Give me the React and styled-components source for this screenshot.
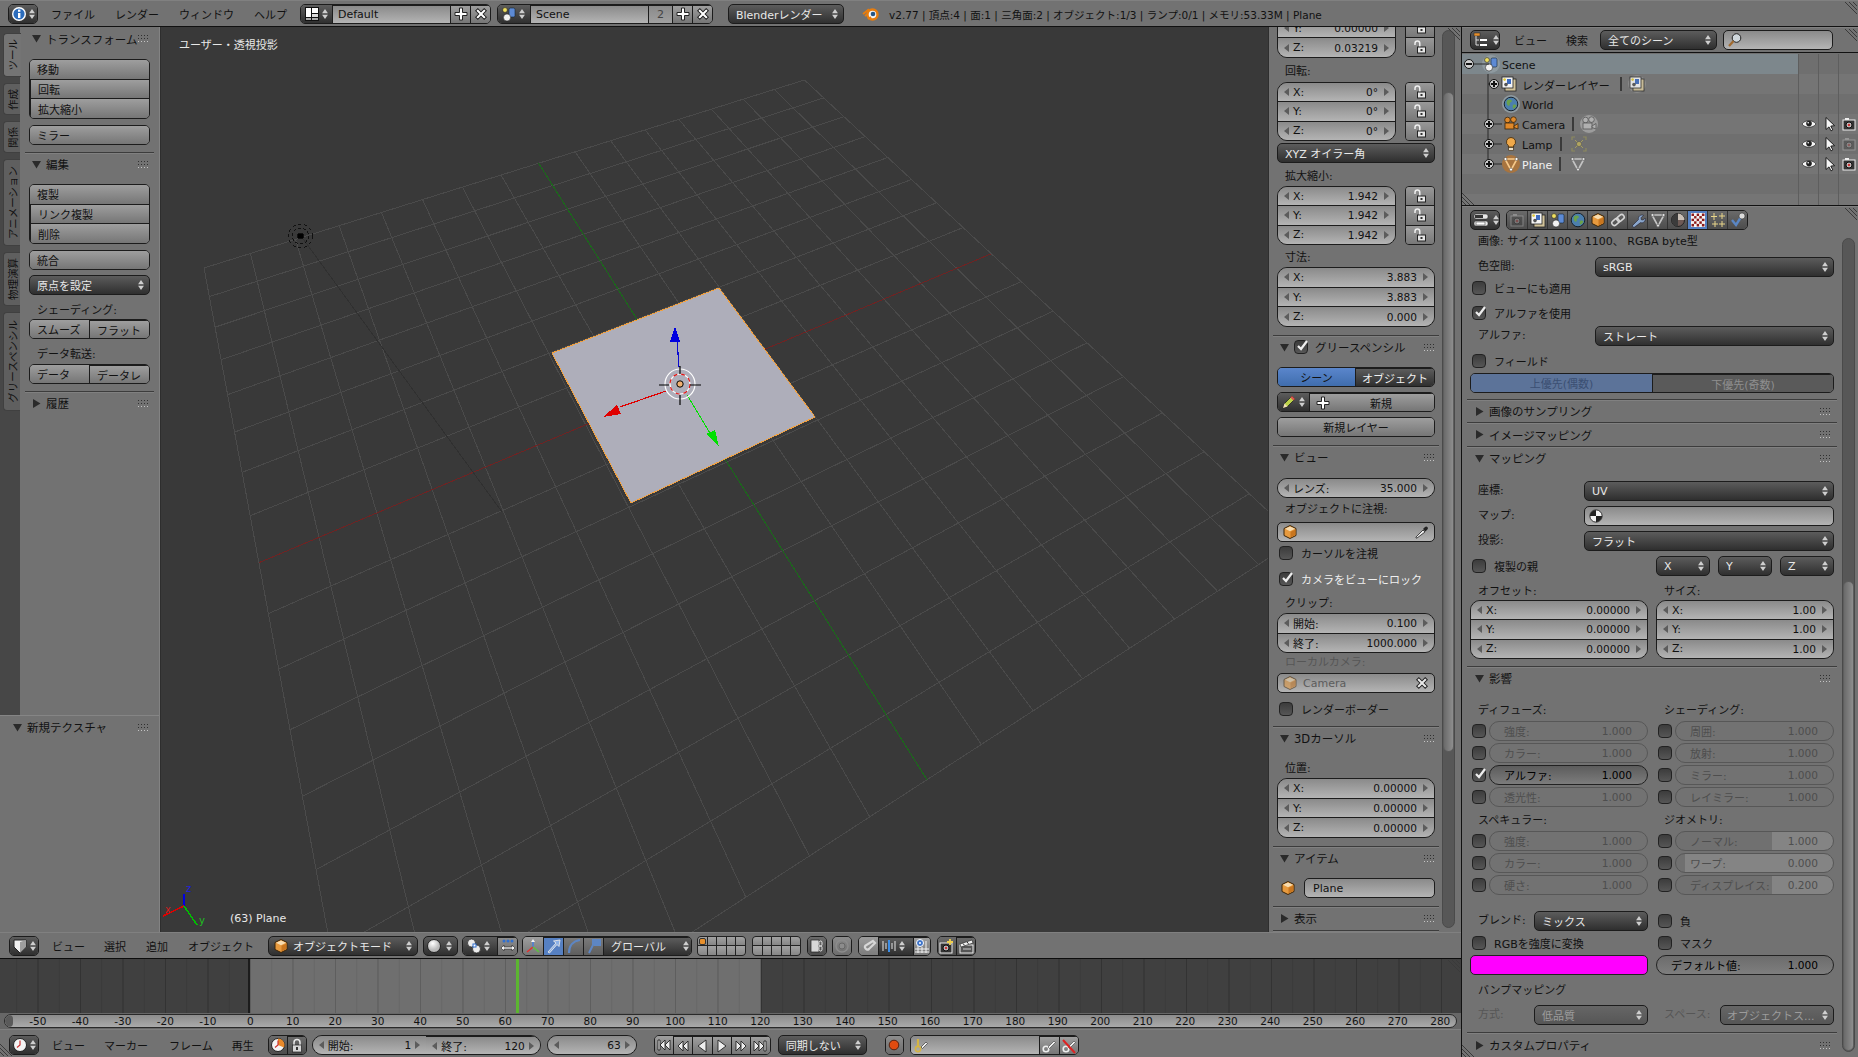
import React from "react";
import styled, { createGlobalStyle, css } from "styled-components";

const mt = css`
  margin-top: ${(p) => p.$mt || 0}px;
`;

const GlobalStyle = createGlobalStyle`
  html, body { margin: 0; padding: 0; background: #727272; overflow: hidden; }
  * { box-sizing: border-box; }
  body {
    font-family: "DejaVu Sans", "Noto Sans CJK JP", sans-serif;
    font-size: 11px;
    color: #111;
  }
`;

const Screen = styled.div`
  width: 1858px;
  height: 1057px;
  display: flex;
  flex-direction: column;
  position: relative;
  overflow: hidden;
`;

const HeaderBar = styled.div`
  display: flex;
  align-items: center;
  background: #727272;
  flex: none;
  height: ${(p) => p.$h || 26}px;
  padding-left: ${(p) => p.$pl ?? 8}px;
  padding-top: ${(p) => p.$pt || 0}px;
  border-top: 1px solid #808080;
  ${(p) => p.$line && "border-bottom: 1px solid #111;"}
  position: relative;
  white-space: nowrap;
`;

const Main = styled.div`
  display: flex;
  flex: 1;
  min-height: 0;
`;
const LeftCol = styled.div`
  width: 1461px;
  display: flex;
  flex-direction: column;
`;
const RightCol = styled.div`
  width: 397px;
  display: flex;
  flex-direction: column;
  border-left: 1px solid #111;
`;
const ViewRow = styled.div`
  height: 905px;
  display: flex;
  flex: none;
`;

/* shared controls */
const Seg = styled.div`
  ${mt}
  display: flex;
  flex: none;
  height: ${(p) => p.$h || 20}px;
  width: ${(p) => (p.$w ? p.$w + "px" : "auto")};
  margin-left: ${(p) => p.$ml || 0}px;
  border: 1px solid #1c1c1c;
  border-radius: 5px;
  overflow: hidden;
  flex-direction: ${(p) => (p.$col ? "column" : "row")};
`;
const SegBtn = styled.div`
  flex: ${(p) => (p.$w ? "none" : 1)};
  width: ${(p) => (p.$w ? p.$w + "px" : "auto")};
  display: flex;
  align-items: center;
  justify-content: ${(p) => (p.$center ? "center" : "flex-start")};
  padding-left: ${(p) => p.$pl ?? 0}px;
  background: ${(p) => p.$bg || "linear-gradient(#9e9e9e, #767676)"};
  color: ${(p) => p.$c || "#111"};
  & + & {
    ${(p) => (p.$col ? "border-top" : "border-left")}: 1px solid #1c1c1c;
  }
`;
const Drop = styled.div`
  ${mt}
  display: flex;
  flex: ${(p) => (p.$w || p.$fix ? "none" : "1 1 auto")};
  align-items: center;
  height: 20px;
  width: ${(p) => (p.$w ? p.$w + "px" : "auto")};
  margin-left: ${(p) => (p.$auto ? "auto" : (p.$ml || 0) + "px")};
  padding: 0 3px 0 ${(p) => p.$pl ?? 7}px;
  gap: ${(p) => p.$gap ?? 4}px;
  border: 1px solid #1c1c1c;
  border-radius: 5px;
  color: ${(p) => (p.$off ? "#9c9c9c" : "#e8e8e8")};
  background: ${(p) => (p.$off ? "linear-gradient(#666, #565656)" : "linear-gradient(#5c5c5c, #2f2f2f)")};
`;
const DropText = styled.span`
  flex: 1;
  overflow: hidden;
  white-space: nowrap;
`;
const Fill = styled.span`
  flex: 1;
`;
const Txt = styled.span`
  margin-left: ${(p) => p.$ml || 0}px;
`;
const FieldBox = styled.div`
  ${mt}
  display: flex;
  flex: ${(p) => (p.$w || p.$fix ? "none" : "1 1 auto")};
  align-items: center;
  height: 20px;
  width: ${(p) => (p.$w ? p.$w + "px" : "auto")};
  margin-left: ${(p) => p.$ml || 0}px;
  padding: 0 4px 0 ${(p) => p.$pl ?? 6}px;
  gap: 5px;
  border: 1px solid #1c1c1c;
  border-radius: 5px;
  color: ${(p) => p.$c || "#111"};
  background: linear-gradient(#8a8a8a, #b4b4b4);
`;
const NumGroup = styled.div`
  ${mt}
  flex: ${(p) => (p.$w ? "none" : "1 1 auto")};
  width: ${(p) => (p.$w ? p.$w + "px" : "auto")};
  margin-left: ${(p) => p.$ml || 0}px;
  height: ${(p) => p.$h || 59}px;
  border: 1px solid #1c1c1c;
  border-radius: 10px;
  overflow: hidden;
  display: flex;
  flex-direction: ${(p) => (p.$row ? "row" : "column")};
`;
const NumRow = styled.div`
  flex: 1;
  display: flex;
  align-items: center;
  justify-content: ${(p) => (p.$end ? "flex-end" : "space-between")};
  padding: 0 ${(p) => p.$pr ?? 17}px 0 15px;
  position: relative;
  background: linear-gradient(#8a8a8a, #b4b4b4);
  & > span:last-child {
    font-size: 10.6px;
  }
  & + & {
    border-top: ${(p) => (p.$side ? "0" : "1px solid #1c1c1c")};
    border-left: ${(p) => (p.$side ? "1px solid #1c1c1c" : "0")};
  }
  &::before,
  &::after {
    content: "";
    position: absolute;
    top: 50%;
    margin-top: -4px;
    border: 4px solid transparent;
  }
  &::before {
    left: 2px;
    border-right: 5px solid #5c5c5c;
  }
  &::after {
    right: 2px;
    border-left: 5px solid #5c5c5c;
  }
`;
const LockCol = styled.div`
  display: flex;
  flex-direction: column;
  width: 30px;
  height: ${(p) => p.$h || 59}px;
  border: 1px solid #1c1c1c;
  border-radius: 4px;
  overflow: hidden;
  margin-left: 9px;
  flex: none;
`;
const LockCell = styled.div`
  flex: 1;
  display: flex;
  align-items: center;
  justify-content: center;
  background: linear-gradient(#989898, #787878);
  & + & {
    border-top: 1px solid #1c1c1c;
  }
`;
const Flex = styled.div`
  ${mt}
  display: flex;
  align-items: center;
  margin-left: ${(p) => p.$ml || 0}px;
`;
const Label = styled.div`
  ${mt}
  height: 14px;
  line-height: 14px;
  padding-left: ${(p) => p.$pl ?? 8}px;
  color: ${(p) => p.$c || "#111"};
  white-space: nowrap;
  flex: ${(p) => (p.$w ? "none" : "initial")};
  width: ${(p) => (p.$w ? p.$w + "px" : "auto")};
`;
const CheckRow = styled.div`
  ${mt}
  display: flex;
  align-items: center;
  height: 20px;
  gap: 8px;
  margin-left: 2px;
  color: ${(p) => p.$c || "#111"};
  white-space: nowrap;
`;
const Box = styled.div`
  width: 14px;
  height: 14px;
  flex: none;
  border: 1px solid #222;
  border-radius: 4px;
  background: linear-gradient(#3c3c3c, #565656);
  position: relative;
  margin-right: ${(p) => p.$mr || 0}px;
`;
const Tick = styled.svg`
  position: absolute;
  left: 0;
  top: -3px;
  width: 15px;
  height: 15px;
`;
const Sep = styled.div`
  ${mt}
  height: 1px;
  flex: none;
  background: #3c3c3c;
  box-shadow: 0 1px 0 #808080;
  margin-left: ${(p) => p.$ml ?? -4}px;
  margin-right: ${(p) => p.$mr ?? -4}px;
`;
const Head = styled.div`
  display: flex;
  align-items: center;
  height: ${(p) => p.$h || 22}px;
  flex: none;
  font-size: 11.5px;
  color: #111;
  padding-left: ${(p) => p.$pl ?? 3}px;
  gap: 5px;
  white-space: nowrap;
  & > span {
    min-width: 0;
  }
`;
const Grip = styled.svg`
  width: 11px;
  height: 7px;
  margin-left: auto;
  margin-right: ${(p) => p.$mr ?? 6}px;
  flex: none;
`;
const Tri = styled.svg`
  width: 9px;
  height: 9px;
  flex: none;
`;
const MenuItem = styled.span`
  margin-left: ${(p) => p.$ml}px;
  padding-top: ${(p) => p.$dy || 0}px;
  color: #111;
`;
const Ic = styled.svg`
  width: ${(p) => p.$s || 16}px;
  height: ${(p) => p.$s || 16}px;
  flex: none;
  display: block;
  margin-left: ${(p) => p.$ml || 0}px;
  opacity: ${(p) => p.$op ?? 1};
`;
const Arrows = styled.svg`
  width: 10px;
  height: 14px;
  flex: none;
  display: block;
`;
const Hatch = styled.svg`
  position: absolute;
  width: 12px;
  height: 12px;
  ${(p) => (p.$bl ? "left: 0; bottom: 0;" : "right: 1px; top: 1px;")}
  pointer-events: none;
`;
const Scroll = styled.div`
  position: absolute;
  right: ${(p) => p.$r}px;
  top: ${(p) => p.$top}px;
  height: ${(p) => p.$len}px;
  width: 13px;
  border: 1px solid #4a4a4a;
  border-radius: 7px;
  background: #575757;
  overflow: hidden;
  display: flex;
  flex-direction: column;
`;
const ScrollThumb = styled.div`
  margin-top: ${(p) => p.$top}px;
  height: ${(p) => p.$len}px;
  border-radius: 6px;
  background: linear-gradient(90deg, #6a6a6a, #8e8e8e);
  border: 1px solid #5e5e5e;
`;

/* left tool shelf */
const Shelf = styled.div`
  width: 160px;
  flex: none;
  display: flex;
  flex-direction: column;
  background: #727272;
  border-right: 1px solid #838383;
  box-shadow: 1px 0 0 #2e2e2e;
  z-index: 1;
`;
const ShelfTop = styled.div`
  height: 689px;
  display: flex;
  flex: none;
  border-bottom: 1px solid #858585;
`;
const TabCol = styled.div`
  width: 20px;
  flex: none;
  background: #474747;
  padding: 6px 0 0 3px;
  display: flex;
  flex-direction: column;
  gap: 6px;
`;
const Tab = styled.div`
  height: ${(p) => p.$h}px;
  border-radius: 4px 0 0 4px;
  background: ${(p) => (p.$on ? "#747474" : "#5f5f5f")};
  ${(p) => p.$on && "margin-right: -1px;"}
  border: 1px solid #404040;
  border-right: 0;
  display: flex;
  align-items: center;
  justify-content: center;
  overflow: hidden;
`;
const TabText = styled.span`
  writing-mode: vertical-rl;
  text-orientation: sideways;
  transform: rotate(180deg);
  white-space: nowrap;
  font-size: 10.5px;
  color: #111;
`;
const ShelfBody = styled.div`
  flex: 1;
  min-width: 0;
  padding: 0 9px;
  display: flex;
  flex-direction: column;
`;
const RedoPanel = styled.div`
  flex: 1;
  padding: 0 10px 0 9px;
`;

/* 3d canvas */
const Canvas = styled.div`
  flex: 1;
  position: relative;
  background: #393939;
  overflow: hidden;
`;
const CanvasSvg = styled.svg`
  position: absolute;
  left: 0;
  top: 0;
  width: 100%;
  height: 100%;
`;
const ViewName = styled.div`
  position: absolute;
  left: 19px;
  top: 9px;
  color: #e8e8e8;
  font-size: 11px;
`;
const FrameName = styled.div`
  position: absolute;
  left: 70px;
  bottom: 7px;
  color: #e8e8e8;
  font-size: 11px;
`;

/* n panel */
const NPanel = styled.div`
  width: 193px;
  flex: none;
  background: #727272;
  position: relative;
  overflow: hidden;
  border-left: 1px solid #2e2e2e;
`;
const NBody = styled.div`
  width: 166px;
  padding-left: 8px;
  display: flex;
  flex-direction: column;
  margin-top: -29px;
`;
const FieldRow = styled.div`
  ${mt}
  display: flex;
`;

/* timeline */
const Timeline = styled.div`
  height: 55px;
  flex: none;
  display: flex;
  position: relative;
  border-top: 1px solid #0c0c0c;
  background: #404040;
`;
const Range = styled.div`
  width: ${(p) => p.$w}px;
  flex: none;
  background-color: ${(p) => p.$bg};
  background-image: linear-gradient(90deg, ${(p) => p.$major} 1px, transparent 1px),
    linear-gradient(90deg, ${(p) => p.$minor} 1px, transparent 1px);
  background-size: 42.5px 100%, 21.25px 100%;
  background-position: ${(p) => p.$off}px 0, ${(p) => p.$off}px 0;
  ${(p) => p.$end && `border-right: 2px solid #1c1c1c;`}
`;
const Playhead = styled.div`
  position: absolute;
  left: 516px;
  top: 0;
  bottom: 0;
  width: 3px;
  background: #5cb531;
`;
const RulerWrap = styled.div`
  height: 16px;
  flex: none;
  background: #676767;
  padding: 1px 4px 0 4px;
`;
const Ruler = styled.div`
  height: 14px;
  border: 1px solid #2a2a2a;
  border-radius: 7px;
  background: linear-gradient(#8c8c8c, #aaaaaa);
  display: flex;
  padding-left: 11.5px;
  overflow: hidden;
  position: relative;
`;
const RulerLabel = styled.span`
  width: 42.5px;
  flex: none;
  text-align: center;
  line-height: 12px;
  font-size: 10.5px;
  color: #111;
`;
const RulerKnob = styled.span`
  position: absolute;
  left: 0;
  top: 0;
  bottom: 0;
  width: 8px;
  background: #5a5a5a;
  border-radius: 6px;
`;
const Status = styled.span`
  margin-left: 9px;
  padding-top: 1px;
  color: #111;
  font-size: 10.5px;
`;

/* layers */
const LayerGrid = styled.div`
  display: grid;
  grid-template-columns: repeat(5, 1fr);
  grid-template-rows: 1fr 1fr;
  width: 49px;
  height: 20px;
  flex: none;
  margin-left: ${(p) => p.$ml || 0}px;
  gap: 1px;
  background: #222;
  border: 1px solid #222;
  border-radius: 4px;
  overflow: hidden;
`;
const LayerCell = styled.div`
  background: linear-gradient(#a2a2a2, #868686);
  position: relative;
  ${(p) =>
    p.$dot &&
    `&::after { content: ""; position: absolute; left: 1px; top: 1px; width: 5px; height: 5px; background: #e8902c; border-radius: 2px; border: 1px solid #333; }`}
`;

/* outliner */
const Outliner = styled.div`
  height: 153px;
  flex: none;
  background: #707070;
  border-bottom: 1px solid #111;
  padding-top: 1px;
  position: relative;
  overflow: hidden;
`;
const OutRow = styled.div`
  height: 20px;
  display: grid;
  grid-template-columns: 336px 20px 20px 20px;
  background: ${(p) => (p.$sel ? "#7d878c" : p.$alt ? "#757575" : "#6f6f6f")};
`;
const OutName = styled.div`
  display: flex;
  align-items: center;
  padding-left: ${(p) => p.$pl}px;
  white-space: nowrap;
  color: ${(p) => p.$c || "#111"};
  gap: ${(p) => p.$gap ?? 0}px;
`;
const OutText = styled.span`
  margin-left: ${(p) => p.$ml || 0}px;
  padding-top: 2px;
`;
const OutCell = styled.div`
  border-left: 1px solid #5e5e5e;
  display: flex;
  align-items: center;
  justify-content: center;
  background: ${(p) => (p.$first ? "#6f6f6f" : "transparent")};
`;
const Bar = styled.span`
  width: 2px;
  height: 14px;
  background: #3a3a3a;
  margin-left: ${(p) => p.$ml}px;
  margin-right: ${(p) => p.$mr}px;
  flex: none;
`;
const Halo = styled.span`
  display: flex;
  align-items: center;
  justify-content: center;
  width: 18px;
  height: 18px;
  border-radius: 50%;
  flex: none;
  margin-left: ${(p) => p.$ml || 0}px;
  background: ${(p) => p.$bg || "transparent"};
`;
const TreeLines = styled.svg`
  position: absolute;
  left: 0;
  top: 1px;
  width: 60px;
  height: 153px;
  pointer-events: none;
`;
const Expander = styled.span`
  width: 10px;
  height: 10px;
  flex: none;
  border: 1px solid #111;
  border-radius: 50%;
  background: #cfcfcf;
  position: relative;
  z-index: 1;
  &::before {
    content: "";
    position: absolute;
    left: 1px;
    right: 1px;
    top: 3px;
    height: 2px;
    background: #111;
  }
  ${(p) =>
    p.$plus &&
    `&::after { content: ""; position: absolute; top: 1px; bottom: 1px; left: 3px; width: 2px; background: #111; }`}
`;

/* properties */
const Props = styled.div`
  flex: 1;
  position: relative;
  background: #727272;
  overflow: hidden;
`;
const PropsBody = styled.div`
  width: 372px;
  padding-left: 8px;
  display: flex;
  flex-direction: column;
`;
const PropRow = styled.div`
  ${mt}
  display: flex;
  align-items: center;
  height: 20px;
  flex: none;
`;
const Cols = styled.div`
  ${mt}
  display: grid;
  grid-template-columns: 178px 178px;
  column-gap: 8px;
`;
const SlideRow = styled.div`
  display: flex;
  align-items: center;
  height: 20px;
  margin-top: ${(p) => p.$mt ?? 2}px;
  gap: 3px;
  padding-left: 2px;
`;
const Slide = styled.div`
  flex: 1;
  height: 20px;
  display: flex;
  align-items: center;
  justify-content: space-between;
  padding: 0 15px 0 14px;
  border: 1px solid ${(p) => (p.$on || p.$def ? "#222" : "#575757")};
  border-radius: 10px;
  color: ${(p) => (p.$on || p.$def ? "#000" : "#4e4e4e")};
  background: ${(p) =>
    p.$def
      ? "linear-gradient(#6c6c6c, #7e7e7e)"
      : p.$on
      ? "linear-gradient(#5c5c5c, #7c7c7c)"
      : p.$fill !== undefined
      ? `linear-gradient(90deg, #707070 ${p.$fill}%, #848484 ${p.$fill}%)`
      : "#727272"};
  & > span:last-child {
    font-size: 10.6px;
  }
`;
const Swatch = styled.div`
  height: 20px;
  border: 1px solid #222;
  border-radius: 5px;
  background: #ff00ff;
`;
const TabStrip = styled.div`
  display: flex;
  height: 20px;
  margin-left: 6px;
  border: 1px solid #1c1c1c;
  border-radius: 5px;
  overflow: hidden;
`;
const PropTab = styled.div`
  width: 20px;
  display: flex;
  align-items: center;
  justify-content: center;
  background: ${(p) => (p.$on ? "#5680c2" : "linear-gradient(#6a6a6a, #4c4c4c)")};
  & + & {
    border-left: 1px solid #333;
  }
`;

/* icons */
const UpDown = ({ dark }) => (
  <Arrows viewBox="0 0 12 14">
    <polygon points="6,1 9.5,6 2.5,6" fill={dark ? "#444" : "#cfcfcf"} />
    <polygon points="6,13 9.5,8 2.5,8" fill={dark ? "#444" : "#cfcfcf"} />
  </Arrows>
);
const IInfo = () => (
  <Ic viewBox="0 0 16 16">
    <circle cx="8" cy="8" r="7" fill="#fff" />
    <circle cx="8" cy="8" r="5.6" fill="#2b6cbc" />
    <rect x="7" y="7" width="2.4" height="5" fill="#fff" />
    <rect x="7" y="3.6" width="2.4" height="2.2" fill="#fff" />
  </Ic>
);
const ILayout = () => (
  <Ic viewBox="0 0 16 16">
    <rect x="1" y="1" width="14" height="14" fill="#111" />
    <rect x="2" y="2" width="5" height="9" fill="#fff" />
    <rect x="8" y="2" width="6" height="5" fill="#fff" />
    <rect x="8" y="8" width="6" height="3" fill="#ddd" />
    <rect x="2" y="12" width="5" height="2" fill="#aaa" />
    <rect x="8" y="12" width="6" height="2" fill="#aaa" />
  </Ic>
);
const IScene = () => (
  <Ic viewBox="0 0 16 16">
    <circle cx="4" cy="4" r="2.4" fill="#f0e060" stroke="#222" strokeWidth=".6" />
    <rect x="8" y="2" width="6" height="9" rx="1.5" fill="#5d8ad4" stroke="#123" strokeWidth=".6" />
    <circle cx="6" cy="11.5" r="3.6" fill="#f2f2f2" stroke="#222" strokeWidth=".6" />
  </Ic>
);
const IPlus = () => (
  <Ic viewBox="0 0 16 16">
    <path d="M6.5 2h3v4.5H14v3H9.5V14h-3V9.5H2v-3h4.5z" fill="#fff" stroke="#222" strokeWidth="1" />
  </Ic>
);
const IX = ({ c = "#fff" }) => (
  <Ic viewBox="0 0 16 16">
    <path d="M6.5 2h3v4.5H14v3H9.5V14h-3V9.5H2v-3h4.5z" fill={c} stroke="#222" strokeWidth="1" transform="rotate(45 8 8)" />
  </Ic>
);
const ILogo = () => (
  <Ic $s={18} $ml={18} viewBox="0 0 18 18">
    <path d="M1 9l6-4.6M3 11l5-4" stroke="#e87d0d" strokeWidth="2" />
    <circle cx="10.5" cy="9.5" r="5" fill="#f5f5f5" stroke="#e87d0d" strokeWidth="2.4" />
    <circle cx="11" cy="9" r="2.3" fill="#265787" />
    <path d="M6 14l3-2" stroke="#e87d0d" strokeWidth="2" />
  </Ic>
);
const ILock = () => (
  <Ic $s={14} viewBox="0 0 14 14">
    <path d="M2 5V3.4a2.4 2.4 0 0 1 4.8 0V7" fill="none" stroke="#eee" strokeWidth="1.5" />
    <rect x="4.5" y="7" width="8" height="6" fill="#e6e6e6" stroke="#222" />
    <rect x="7.5" y="9" width="2" height="2" fill="#333" />
  </Ic>
);
const ICube = ({ faded }) => (
  <Ic $op={faded ? 0.55 : 1} viewBox="0 0 16 16">
    <polygon points="8,1.5 14,4.5 14,11.5 8,14.5 2,11.5 2,4.5" fill="#e79a3e" stroke="#3a2408" strokeWidth="1" />
    <polygon points="8,2.5 13,4.8 8,7.2 3,4.8" fill="#f7dcb0" />
    <polygon points="8.5,7.8 13.4,5.4 13.4,11 8.5,13.6" fill="#c9761f" />
  </Ic>
);
const IPencil = () => (
  <Ic viewBox="0 0 16 16">
    <path d="M2 14l1.5-4.5L11 2l3 3-7.5 7.5z" fill="#bcd24a" stroke="#222" strokeWidth=".8" />
    <path d="M11 2l3 3-1.6 1.6-3-3z" fill="#d9534f" />
    <path d="M2 14l1.5-4.5 3 3z" fill="#f2e0b5" />
  </Ic>
);
const IDropper = () => (
  <Ic viewBox="0 0 16 16">
    <path d="M3 14l-1 0 0-1 7-7 2 2z" fill="#eee" stroke="#222" strokeWidth=".8" />
    <path d="M9 5l2-2a1.6 1.6 0 0 1 2.4 2.4l-2 2z" fill="#222" />
  </Ic>
);
const IEye = () => (
  <Ic viewBox="0 0 16 16">
    <path d="M1 8c3-4.4 11-4.4 14 0-3 4.4-11 4.4-14 0z" fill="#f4f4f4" stroke="#222" strokeWidth=".7" />
    <circle cx="8" cy="7.6" r="2.8" fill="#222" />
    <circle cx="7.2" cy="6.8" r=".8" fill="#fff" />
  </Ic>
);
const ICursor = () => (
  <Ic viewBox="0 0 16 16">
    <path d="M5 1.5v12l3-2.6 2 4 1.8-1-2-3.8 3.8-.4z" fill="#f4f4f4" stroke="#111" strokeWidth=".9" />
  </Ic>
);
const ICam = ({ off }) => (
  <Ic $op={off ? 0.3 : 1} viewBox="0 0 16 16">
    <rect x="2" y="4" width="12" height="10" fill="#333" stroke="#eee" strokeWidth="1" />
    <rect x="4" y="2" width="4" height="2" fill="#eee" />
    <circle cx="8" cy="9" r="3" fill="#c4c4c4" stroke="#111" />
    <circle cx="8" cy="9" r="1.3" fill="#c33" />
  </Ic>
);
const IRender = ({ faded }) => (
  <Ic $op={faded ? 0.85 : 1} viewBox="0 0 16 16">
    <rect x="4" y="3" width="11" height="12" fill="#d2c39a" stroke="#222" strokeWidth=".8" />
    <rect x="1" y="1" width="11" height="11" fill="#f4f4f4" stroke="#222" strokeWidth=".8" />
    <circle cx="3.6" cy="3.6" r="1.3" fill="#e0c93a" />
    <rect x="6" y="3" width="4" height="5" fill="#3e6cc0" />
    <circle cx="5" cy="8.6" r="1.8" fill="#555" />
  </Ic>
);
const IWorld = () => (
  <Ic viewBox="0 0 16 16">
    <circle cx="8" cy="8" r="6.8" fill="#4c7fae" stroke="#16222e" />
    <path d="M4 4.5c2-1.5 4-1 5 .4-.4 1.4-2 1.2-2.4 2.6.8 1.2-.2 2.6-1.4 2.2C3.8 8.8 3 6.4 4 4.5zM10 9c1.4-.8 2.8-.4 3.4.3-.3 1.8-1.8 3.3-3 3.4-.8-1-1-2.6-.4-3.7z" fill="#6aa14c" />
  </Ic>
);
const IOCam = ({ grey }) => (
  <Ic viewBox="0 0 16 16">
    <g fill={grey ? "#b0b0b0" : "#e0892a"} stroke={grey ? "#555" : "#3a2408"} strokeWidth=".8">
      <circle cx="4.5" cy="4" r="2.8" />
      <circle cx="10.5" cy="3.6" r="2.8" />
      <rect x="2" y="7" width="9" height="6" />
      <polygon points="11,10 15,7.5 15,13 11,11.5" />
    </g>
  </Ic>
);
const ILamp = () => (
  <Ic $ml={9} viewBox="0 0 16 16">
    <path d="M8 1.5a4.5 4.5 0 0 1 2.6 8.2V11H5.4V9.7A4.5 4.5 0 0 1 8 1.5z" fill="#f0a94a" stroke="#3a2408" strokeWidth=".8" />
    <rect x="5.7" y="11.5" width="4.6" height="3" fill="#eadfc7" stroke="#3a2408" strokeWidth=".6" />
  </Ic>
);
const IMesh = ({ grey }) => (
  <Ic viewBox="0 0 16 16">
    <polygon points="2,3 14,3 8,14" fill="none" stroke={grey ? "#c4c4c4" : "#f7c98a"} strokeWidth="1.6" />
    <g fill={grey ? "#e0e0e0" : "#fff"} stroke="#333" strokeWidth=".5">
      <circle cx="2.5" cy="3" r="1.5" />
      <circle cx="13.5" cy="3" r="1.5" />
      <circle cx="8" cy="13.5" r="1.5" />
    </g>
  </Ic>
);
const ILampData = () => (
  <Ic viewBox="0 0 16 16">
    <circle cx="8" cy="8" r="2.6" fill="#b0a460" stroke="#555" strokeWidth=".6" />
    <path d="M1 4V1h3M12 1h3v3M15 12v3h-3M4 15H1v-3" fill="none" stroke="#8d8a5e" strokeWidth="1.2" />
    <path d="M4 4l2 2M12 4l-2 2M4 12l2-2M12 12l-2-2" stroke="#a39c5e" />
  </Ic>
);
const IMag = () => (
  <Ic viewBox="0 0 16 16">
    <circle cx="9.5" cy="6" r="4.3" fill="#cfd7dc" stroke="#222" />
    <path d="M6.5 9l-4.5 5" stroke="#a06a30" strokeWidth="2.2" />
  </Ic>
);
const IOutliner = () => (
  <Ic viewBox="0 0 16 16">
    <rect x="1" y="1" width="6" height="3" fill="#e8902c" stroke="#222" strokeWidth=".5" />
    <path d="M3 4v9h3M3 8h3" stroke="#ddd" fill="none" />
    <rect x="7" y="7" width="7" height="2" fill="#fff" />
    <rect x="7" y="12" width="7" height="2" fill="#fff" />
  </Ic>
);
const IButtons = () => (
  <Ic viewBox="0 0 16 16">
    <rect x="1" y="2" width="14" height="5" rx="2" fill="#e8e8e8" stroke="#222" strokeWidth=".5" />
    <rect x="1" y="9" width="14" height="5" rx="2" fill="#e8e8e8" stroke="#222" strokeWidth=".5" />
    <rect x="2" y="3" width="8" height="3" fill="#333" />
    <rect x="3" y="10" width="9" height="3" fill="#fff" stroke="#333" strokeWidth=".5" />
  </Ic>
);
const ILink = () => (
  <Ic viewBox="0 0 16 16">
    <g fill="none" stroke="#d4d4d4" strokeWidth="1.6">
      <rect x="1.5" y="7.5" width="8" height="5" rx="2.5" transform="rotate(-40 5.5 10)" />
      <rect x="6.5" y="3.5" width="8" height="5" rx="2.5" transform="rotate(-40 10.5 6)" />
    </g>
  </Ic>
);
const IWrench = () => (
  <Ic viewBox="0 0 16 16">
    <path d="M2 14l6.5-6.5c-.8-2.5 1.8-5.4 5-4.2l-2.5 2.5.3 1.9 1.9.3 2-2c.8 2.8-1.8 5.6-4.6 4.6L4 15.5z" fill="#8aa6cc" stroke="#223" strokeWidth=".6" />
  </Ic>
);
const IMatBall = () => (
  <Ic viewBox="0 0 16 16">
    <circle cx="8" cy="8" r="6.5" fill="#6e5a55" stroke="#222" />
    <path d="M8 1.5a6.5 6.5 0 0 0 0 13z" fill="#3b3b3b" />
    <path d="M8 1.5a6.5 6.5 0 0 1 6.5 6.5H8z" fill="#c9bfb6" />
  </Ic>
);
const IChecker = () => {
  const cells = [];
  for (let y = 0; y < 5; y++) {
    for (let x = 0; x < 5; x++) {
      cells.push(<rect key={x + "-" + y} x={1.5 + x * 2.6} y={1.5 + y * 2.6} width="2.6" height="2.6" fill={(x + y) % 2 ? "#f4f4f4" : "#8c1a1a"} />);
    }
  }
  return (
    <Ic viewBox="0 0 16 16">
      <rect x="1" y="1" width="14" height="14" fill="#fff" />
      {cells}
    </Ic>
  );
};
const ISparks = () => (
  <Ic viewBox="0 0 16 16">
    <path d="M4 1v7M1 4.5h6M12 1v6M9 4h6M5 9v6M2 12h6M12 9v6M9 12h6" stroke="#e8d58a" strokeWidth="1" />
  </Ic>
);
const IPhysics = () => (
  <Ic viewBox="0 0 16 16">
    <path d="M2 8l4 5 5-8" stroke="#5a86c4" strokeWidth="2.4" fill="none" />
    <circle cx="12" cy="4" r="3" fill="#dcdcdc" stroke="#222" strokeWidth=".5" />
  </Ic>
);
const IChecks = () => (
  <Ic $s={14} viewBox="0 0 16 16">
    <circle cx="8" cy="8" r="7" fill="#f4f4f4" stroke="#222" />
    <path d="M8 1a7 7 0 0 0-7 7h7zM8 8h7a7 7 0 0 1-7 7z" fill="#222" />
  </Ic>
);
const IView3d = () => (
  <Ic viewBox="0 0 16 16">
    <polygon points="2,2 14,2 14,9 8,15 2,9" fill="#f0f0f0" stroke="#222" />
    <polygon points="8,4 14,2 14,9 8,15" fill="#9e9e9e" />
  </Ic>
);
const ISphere = () => (
  <Ic viewBox="0 0 16 16">
    <defs>
      <radialGradient id="sph" cx="40%" cy="30%">
        <stop offset="0" stopColor="#fff" />
        <stop offset="1" stopColor="#bbb" />
      </radialGradient>
    </defs>
    <circle cx="8" cy="8" r="6.5" fill="url(#sph)" stroke="#222" />
  </Ic>
);
const IPivot = () => (
  <Ic viewBox="0 0 16 16">
    <circle cx="5.5" cy="5" r="4" fill="#ececec" stroke="#222" strokeWidth=".7" />
    <circle cx="10.5" cy="11" r="4" fill="#ececec" stroke="#222" strokeWidth=".7" />
    <rect x="7" y="6" width="3" height="3" fill="#fff" stroke="#2f6fd0" />
  </Ic>
);
const IAround = () => (
  <Ic viewBox="0 0 16 16">
    <g fill="#2f6fd0">
      <circle cx="4" cy="3" r="1.5" />
      <circle cx="8" cy="3" r="1.5" />
      <circle cx="12" cy="3" r="1.5" />
    </g>
    <path d="M1 10l3-3v2h8V7l3 3-3 3v-2H4v2z" fill="#f4f4f4" stroke="#222" strokeWidth=".6" />
  </Ic>
);
const IAxes = () => (
  <Ic viewBox="0 0 16 16">
    <path d="M8 9V2" stroke="#4d7fd8" strokeWidth="1.6" />
    <path d="M8 9l-6 5" stroke="#e03030" strokeWidth="1.6" />
    <path d="M8 9l6 5" stroke="#5cc13e" strokeWidth="1.6" />
    <path d="M8 1l-2 3h4z" fill="#f4f4f4" />
  </Ic>
);
const IArrow = () => (
  <Ic viewBox="0 0 16 16">
    <path d="M2 14L10 5 7.5 3 14 2l-1 6.5L11 6.5 3.5 15z" fill="#8bb0e6" stroke="#e8e8e8" strokeWidth=".9" />
  </Ic>
);
const IRotate = () => (
  <Ic viewBox="0 0 16 16">
    <path d="M3 15C3 8 7 3 14 2" fill="none" stroke="#5d86c4" strokeWidth="2.2" />
  </Ic>
);
const IScale = () => (
  <Ic viewBox="0 0 16 16">
    <path d="M3 15l4-8V2h7v5H8" fill="none" stroke="#5d86c4" strokeWidth="2" />
    <rect x="8" y="2" width="6" height="5" fill="#5d86c4" />
  </Ic>
);
const IChainDoc = () => (
  <Ic viewBox="0 0 16 16">
    <rect x="2" y="2" width="8" height="12" fill="#d8d8d8" stroke="#222" strokeWidth=".7" />
    <rect x="10" y="3" width="3" height="5" rx="1.5" fill="none" stroke="#e8e8e8" />
    <rect x="10" y="8" width="3" height="5" rx="1.5" fill="none" stroke="#e8e8e8" />
  </Ic>
);
const IProp = () => (
  <Ic viewBox="0 0 16 16">
    <circle cx="8" cy="8" r="6" fill="none" stroke="#8c8c8c" strokeWidth="1.5" />
    <circle cx="8" cy="8" r="3" fill="#8c8c8c" stroke="#666" />
  </Ic>
);
const IMagnet = () => (
  <Ic $op={0.85} viewBox="0 0 16 16">
    <path d="M12 3l2 2-6 6a2.5 2.5 0 0 1-3.5-3.5z" fill="none" stroke="#e4e4e4" strokeWidth="2.2" />
  </Ic>
);
const ISnapEl = () => (
  <Ic viewBox="0 0 16 16">
    <path d="M2 3v10M14 3v10M5 5v6M11 5v6" stroke="#e6e6e6" />
    <path d="M8 2v12" stroke="#3d8ee6" strokeWidth="2" />
  </Ic>
);
const ISnapIn = () => (
  <Ic viewBox="0 0 16 16">
    <path d="M1 11h14M1 14h14M4 3v12M8 9v6M12 3v12" stroke="#f4f4f4" />
    <circle cx="6" cy="5" r="3.5" fill="#3d73c9" stroke="#fff" />
    <circle cx="6" cy="5" r="1" fill="#fff" />
  </Ic>
);
const IRenderCam = () => (
  <Ic viewBox="0 0 16 16">
    <rect x="1" y="5" width="12" height="10" fill="#333" stroke="#eee" />
    <circle cx="7" cy="10" r="3" fill="#bbb" stroke="#111" />
    <circle cx="7" cy="10" r="1.2" fill="#c33" />
    <path d="M11 1v6M8 4h6" stroke="#f0d050" strokeWidth="1.8" />
  </Ic>
);
const IClapper = () => (
  <Ic viewBox="0 0 16 16">
    <rect x="2" y="7" width="13" height="8" fill="#555" stroke="#eee" />
    <path d="M2 6l12-4 1 3-12 4z" fill="#f0f0f0" stroke="#222" strokeWidth=".6" />
    <path d="M5 5.5l1.5 1.8M9 4l1.5 1.8" stroke="#222" />
    <path d="M5 11h8" stroke="#ccc" />
  </Ic>
);
const IClock = ({ tint }) => (
  <Ic viewBox="0 0 16 16">
    <circle cx="8" cy="8" r="6.5" fill="#f4f4f4" stroke="#222" />
    {tint && <path d="M8 8V1.5A6.5 6.5 0 0 1 14 10.5z" fill="#e8892a" />}
    <path d="M8 3.5V8l-3 2.5" fill="none" stroke="#c33" strokeWidth="1.2" />
  </Ic>
);
const IPadlock = () => (
  <Ic viewBox="0 0 16 16">
    <path d="M5 7V4.5a3 3 0 0 1 6 0V7" fill="none" stroke="#e8e8e8" strokeWidth="1.5" />
    <rect x="3.5" y="7" width="9" height="7" fill="#d6d6d6" stroke="#222" strokeWidth=".7" />
    <rect x="7" y="9" width="2" height="3" fill="#333" />
  </Ic>
);
const IPlay = ({ d }) => (
  <Ic viewBox="0 0 16 16">
    <path d={d} fill="#eee" stroke="#222" strokeWidth=".9" />
  </Ic>
);
const IRec = () => (
  <Ic viewBox="0 0 16 16">
    <circle cx="8" cy="8" r="4.8" fill="#e04b10" stroke="#521" />
  </Ic>
);
const IKeyGold = () => (
  <Ic viewBox="0 0 16 16">
    <path d="M5 2v8" stroke="#d4b444" strokeWidth="2.2" />
    <circle cx="5" cy="12" r="2.6" fill="none" stroke="#d4b444" strokeWidth="1.6" />
    <path d="M8 10l5-5 1.5 1.5-5 5z" fill="#eee" stroke="#222" strokeWidth=".6" />
  </Ic>
);
const IKey = ({ cross }) => (
  <Ic viewBox="0 0 16 16">
    <circle cx="5" cy="11" r="2.8" fill="none" stroke="#eee" strokeWidth="1.6" />
    <path d="M7 9l6-6 1.5 1.5-6 6z" fill="#eee" stroke="#222" strokeWidth=".5" />
    {cross && <path d="M2 2l12 13" stroke="#d22" strokeWidth="2" />}
  </Ic>
);

const TickMark = () => (
  <Tick viewBox="0 0 15 15">
    <path d="M3 8l3 3 6-8" fill="none" stroke="#eee" strokeWidth="2.2" />
  </Tick>
);
const GripDots = ({ mr }) => (
  <Grip $mr={mr} viewBox="0 0 11 7">
    {[0, 1, 2, 3].map((i) =>
      [0, 1, 2].map((j) => <rect key={i + "" + j} x={i * 3} y={j * 3} width="1" height="1" fill={j === 2 ? "#c4c4c4" : "#303030"} />)
    )}
  </Grip>
);
const Triangle = ({ open }) => (
  <Tri viewBox="0 0 9 9">
    <polygon points={open ? "0,1 9,1 4.5,8.5" : "1,0 1,9 8.5,4.5"} fill="#2a2a2a" />
  </Tri>
);
const Corner = ({ bl }) => (
  <Hatch $bl={bl} viewBox="0 0 12 12">
    {bl ? (
      <path d="M0 4l8 8M0 8l4 4M0 0l12 12" stroke="#3a3a3a" />
    ) : (
      <path d="M4 0l8 8M8 0l4 4M0 0l12 12" stroke="#3a3a3a" />
    )}
  </Hatch>
);

/* panel header */
const PanelHead = ({ title, open = true, h, pl, mr, children }) => (
  <Head $h={h} $pl={pl}>
    <Triangle open={open} />
    {children}
    <span>{title}</span>
    <GripDots mr={mr} />
  </Head>
);

/* number block */
const Nums = ({ rows, w, ml, mt: top, h }) => (
  <NumGroup $w={w} $ml={ml} $mt={top} $h={h}>
    {rows.map(([k, v], i) => (
      <NumRow key={i}>
        <span>{k}</span>
        <span>{v}</span>
      </NumRow>
    ))}
  </NumGroup>
);
const Locks = () => (
  <LockCol>
    <LockCell><ILock /></LockCell>
    <LockCell><ILock /></LockCell>
    <LockCell><ILock /></LockCell>
  </LockCol>
);
const Check = ({ on, children, mt: top, c }) => (
  <CheckRow $mt={top} $c={c}>
    <Box>{on && <TickMark />}</Box>
    <span>{children}</span>
  </CheckRow>
);

/* perspective grid */
const quad = [[204, 268], [804.5, 80], [1298, 539], [367, 1143]];
function makeWarp([p0, p1, p2, p3]) {
  const sx = p0[0] - p1[0] + p2[0] - p3[0];
  const sy = p0[1] - p1[1] + p2[1] - p3[1];
  const dx1 = p1[0] - p2[0];
  const dx2 = p3[0] - p2[0];
  const dy1 = p1[1] - p2[1];
  const dy2 = p3[1] - p2[1];
  const det = dx1 * dy2 - dx2 * dy1;
  const g = (sx * dy2 - dx2 * sy) / det;
  const h = (dx1 * sy - sx * dy1) / det;
  const a = p1[0] - p0[0] + g * p1[0];
  const b = p3[0] - p0[0] + h * p3[0];
  const d = p1[1] - p0[1] + g * p1[1];
  const e = p3[1] - p0[1] + h * p3[1];
  return (u, v) => {
    const w = g * u + h * v + 1;
    return [(a * u + b * v + p0[0]) / w, (d * u + e * v + p0[1]) / w];
  };
}
const warp = makeWarp(quad);
const gridLines = [];
for (let i = 0; i <= 16; i++) {
  const t = i / 16;
  if (i === 8) continue;
  gridLines.push([warp(t, 0), warp(t, 1)]);
  gridLines.push([warp(0, t), warp(1, t)]);
}

const ViewportDrawing = () => (
  <CanvasSvg viewBox="160 27 1108 905" shapeRendering="crispEdges">
    {gridLines.map(([a, b], i) => (
      <line key={i} x1={a[0]} y1={a[1]} x2={b[0]} y2={b[1]} stroke="#4a4a4a" />
    ))}
    <line x1={warp(0.5, 0)[0]} y1={warp(0.5, 0)[1]} x2={warp(0.5, 1)[0]} y2={warp(0.5, 1)[1]} stroke="#196b19" />
    <line x1={warp(0, 0.5)[0]} y1={warp(0, 0.5)[1]} x2={warp(1, 0.5)[0]} y2={warp(1, 0.5)[1]} stroke="#6f2323" />
    <polygon points="552,353 719,288 815,417 631,503" fill="#aeaeba" stroke="#f0a040" />
    <line x1="301" y1="236" x2="502" y2="512" stroke="#303030" />
    <g fill="none" stroke="#111">
      <circle cx="300.5" cy="236" r="3" fill="#000" />
      <circle cx="300.5" cy="236" r="8" strokeDasharray="3 2" />
      <circle cx="300.5" cy="236" r="12" strokeDasharray="3 3" />
    </g>
    <line x1="679" y1="367" x2="677" y2="340" stroke="#0a0ad0" strokeWidth="1.2" />
    <polygon points="675,326 680,342 670,342" fill="#0000e0" />
    <line x1="666" y1="391" x2="620" y2="407" stroke="#e00000" strokeWidth="1.2" />
    <polygon points="603,417 617,405 621,414" fill="#e00000" />
    <line x1="687" y1="395" x2="710" y2="433" stroke="#00e000" strokeWidth="1" />
    <polygon points="719,447 706,434 715,430" fill="#00e000" />
    <g shapeRendering="auto">
      <circle cx="680" cy="384" r="15" fill="none" stroke="#fff" strokeWidth="1.2" />
      <circle cx="680" cy="384" r="10" fill="none" stroke="#fff" strokeWidth="1.2" />
      <circle cx="680" cy="384" r="10" fill="none" stroke="#e01010" strokeWidth="1.2" strokeDasharray="4 4" />
      <path d="M659 385h10M690 385h11M680 366v8M680 395v10" stroke="#000" strokeWidth="1.2" fill="none" />
      <circle cx="680" cy="384" r="3.2" fill="#f0b070" stroke="#000" />
    </g>
    <line x1="184" y1="906" x2="184" y2="894" stroke="#0000e0" strokeWidth="1.5" />
    <line x1="184" y1="906" x2="163" y2="916" stroke="#e00000" strokeWidth="1.5" />
    <line x1="184" y1="906" x2="197" y2="925" stroke="#00c000" strokeWidth="1.5" />
    <text x="186" y="892" fontSize="10" fill="#2020e0" fontFamily="DejaVu Sans">z</text>
    <text x="165" y="913" fontSize="10" fill="#d02020" fontFamily="DejaVu Sans">x</text>
    <text x="199" y="924" fontSize="10" fill="#20c020" fontFamily="DejaVu Sans">y</text>
  </CanvasSvg>
);

const frames = [];
for (let f = -50; f <= 280; f += 10) frames.push(f);

const Layers = ({ ml, dot }) => (
  <LayerGrid $ml={ml}>
    {Array.from({ length: 10 }).map((_, i) => (
      <LayerCell key={i} $dot={dot && i === 0} />
    ))}
  </LayerGrid>
);

const darkBg = "linear-gradient(#5c5c5c, #2f2f2f)";
const blueBg = "linear-gradient(#5a86cc, #3f6dad)";
const fieldBg = "linear-gradient(#8a8a8a, #b4b4b4)";
const toolBg = "linear-gradient(#6a6a6a, #4c4c4c)";
const midBg = "linear-gradient(#8d8d8d, #6c6c6c)";

export default function App() {
  return (
    <Screen>
      <GlobalStyle />
      <HeaderBar $h={27} $line>
        <Seg $w={30} $h={20}>
          <SegBtn $bg={darkBg} $pl={2}><IInfo /><UpDown /></SegBtn>
        </Seg>
        <MenuItem $ml={13} $dy={1}>ファイル</MenuItem>
        <MenuItem $ml={20} $dy={1}>レンダー</MenuItem>
        <MenuItem $ml={20} $dy={1}>ウィンドウ</MenuItem>
        <MenuItem $ml={20} $dy={1}>ヘルプ</MenuItem>
        <Seg $ml={13} $w={191}>
          <SegBtn $w={31} $bg={darkBg} $pl={3}><ILayout /><UpDown /></SegBtn>
          <SegBtn $pl={5} $bg={fieldBg}>Default</SegBtn>
          <SegBtn $w={20} $center><IPlus /></SegBtn>
          <SegBtn $w={20} $center><IX /></SegBtn>
        </Seg>
        <Seg $ml={6} $w={216}>
          <SegBtn $w={32} $bg={darkBg} $pl={3}><IScene /><UpDown /></SegBtn>
          <SegBtn $pl={5} $bg={fieldBg}>Scene</SegBtn>
          <SegBtn $w={24} $center $c="#444" $bg="linear-gradient(#8a8a8a, #a0a0a0)">2</SegBtn>
          <SegBtn $w={20} $center><IPlus /></SegBtn>
          <SegBtn $w={20} $center><IX /></SegBtn>
        </Seg>
        <Drop $ml={15} $w={116}>
          <DropText>Blenderレンダー</DropText>
          <UpDown />
        </Drop>
        <ILogo />
        <Status>v2.77 | 頂点:4 | 面:1 | 三角面:2 | オブジェクト:1/3 | ランプ:0/1 | メモリ:53.33M | Plane</Status>
        <Corner />
      </HeaderBar>

      <Main>
        <LeftCol>
          <ViewRow>
            <Shelf>
              <ShelfTop>
                <TabCol>
                  <Tab $h={44} $on><TabText>ツール</TabText></Tab>
                  <Tab $h={32}><TabText>作成</TabText></Tab>
                  <Tab $h={32}><TabText>関係</TabText></Tab>
                  <Tab $h={87}><TabText>アニメーション</TabText></Tab>
                  <Tab $h={54}><TabText>物理演算</TabText></Tab>
                  <Tab $h={99}><TabText>グリースペンシル</TabText></Tab>
                </TabCol>
                <ShelfBody>
                  <PanelHead title="トランスフォーム" h={23} mr={1} />
                  <Seg $col $h={60} $mt={9}>
                    <SegBtn $col $pl={7}>移動</SegBtn>
                    <SegBtn $col $pl={7}>回転</SegBtn>
                    <SegBtn $col $pl={7}>拡大縮小</SegBtn>
                  </Seg>
                  <Seg $mt={6}><SegBtn $pl={7}>ミラー</SegBtn></Seg>
                  <Sep $mt={7} />
                  <PanelHead title="編集" mr={1} />
                  <Seg $col $h={60} $mt={9}>
                    <SegBtn $col $pl={7}>複製</SegBtn>
                    <SegBtn $col $pl={7}>リンク複製</SegBtn>
                    <SegBtn $col $pl={7}>削除</SegBtn>
                  </Seg>
                  <Seg $mt={6}><SegBtn $pl={7}>統合</SegBtn></Seg>
                  <Drop $mt={5} $fix>
                    <DropText>原点を設定</DropText>
                    <UpDown />
                  </Drop>
                  <Label $mt={9} $pl={8}>シェーディング:</Label>
                  <Seg $mt={1}>
                    <SegBtn $pl={7}>スムーズ</SegBtn>
                    <SegBtn $pl={7}>フラット</SegBtn>
                  </Seg>
                  <Label $mt={9} $pl={8}>データ転送:</Label>
                  <Seg $mt={2}>
                    <SegBtn $pl={7}>データ</SegBtn>
                    <SegBtn $pl={7}>データレ</SegBtn>
                  </Seg>
                  <Sep $mt={7} />
                  <PanelHead title="履歴" open={false} mr={1} />
                </ShelfBody>
              </ShelfTop>
              <RedoPanel>
                <PanelHead title="新規テクスチャ" open h={22} mr={0} pl={4} />
              </RedoPanel>
            </Shelf>

            <Canvas>
              <ViewportDrawing />
              <ViewName>ユーザー・透視投影</ViewName>
              <FrameName>(63) Plane</FrameName>
            </Canvas>

            <NPanel>
              <NBody>
                <FieldRow>
                  <Nums w={119} rows={[["", ""], ["Y:", "0.00000"], ["Z:", "0.03219"]]} h={60} />
                  <Locks />
                </FieldRow>
                <Label $mt={7}>回転:</Label>
                <FieldRow $mt={3}>
                  <Nums w={119} rows={[["X:", "0°"], ["Y:", "0°"], ["Z:", "0°"]]} />
                  <Locks />
                </FieldRow>
                <Drop $mt={2} $fix>
                  <DropText>XYZ オイラー角</DropText>
                  <UpDown />
                </Drop>
                <Label $mt={7}>拡大縮小:</Label>
                <FieldRow $mt={2}>
                  <Nums w={119} rows={[["X:", "1.942"], ["Y:", "1.942"], ["Z:", "1.942"]]} />
                  <Locks />
                </FieldRow>
                <Label $mt={6}>寸法:</Label>
                <Nums mt={2} rows={[["X:", "3.883"], ["Y:", "3.883"], ["Z:", "0.000"]]} h={60} />
                <Sep $mt={8} />
                <PanelHead title="グリースペンシル" mr={0}>
                  <Box $mr={2}><TickMark /></Box>
                </PanelHead>
                <Seg $mt={9}>
                  <SegBtn $w={77} $center $bg={blueBg}>シーン</SegBtn>
                  <SegBtn $center $bg={darkBg} $c="#f0f0f0">オブジェクト</SegBtn>
                </Seg>
                <Seg $mt={5}>
                  <SegBtn $w={31} $bg={darkBg} $pl={3}><IPencil /><UpDown /></SegBtn>
                  <SegBtn $pl={5}><IPlus /><Txt $ml={39}>新規</Txt></SegBtn>
                </Seg>
                <Seg $mt={5}><SegBtn $center>新規レイヤー</SegBtn></Seg>
                <Sep $mt={8} />
                <PanelHead title="ビュー" mr={0} />
                <NumGroup $mt={10} $h={20}>
                  <NumRow><span>レンズ:</span><span>35.000</span></NumRow>
                </NumGroup>
                <Label $mt={5}>オブジェクトに注視:</Label>
                <FieldBox $mt={5} $fix $pl={4}>
                  <ICube />
                  <Fill />
                  <IDropper />
                </FieldBox>
                <Check mt={1}>カーソルを注視</Check>
                <Check mt={6} on c="#f0f0f0">カメラをビューにロック</Check>
                <Label $mt={8}>クリップ:</Label>
                <Nums mt={2} h={40} rows={[["開始:", "0.100"], ["終了:", "1000.000"]]} />
                <Label $mt={3} $c="#565656">ローカルカメラ:</Label>
                <FieldBox $mt={3} $fix $pl={4} $c="#5c5c5c">
                  <ICube faded />
                  <DropText>Camera</DropText>
                  <IX c="#e8e8e8" />
                </FieldBox>
                <Check mt={6}>レンダーボーダー</Check>
                <Sep $mt={7} />
                <PanelHead title="3Dカーソル" mr={0} />
                <Label $mt={13}>位置:</Label>
                <Nums mt={2} h={60} rows={[["X:", "0.00000"], ["Y:", "0.00000"], ["Z:", "0.00000"]]} />
                <Sep $mt={8} />
                <PanelHead title="アイテム" mr={0} />
                <Flex $mt={9} $ml={3}>
                  <ICube />
                  <FieldBox $ml={8} $pl={8}>Plane</FieldBox>
                </Flex>
                <Sep $mt={8} />
                <PanelHead title="表示" open={false} mr={0} />
                <Sep $mt={1} />
              </NBody>
              <Scroll $r={6} $top={3} $len={898}>
                <ScrollThumb $top={61} $len={660} />
              </Scroll>
              <Corner />
            </NPanel>
          </ViewRow>

          <HeaderBar $h={26} $pl={9}>
            <Seg $w={30}>
              <SegBtn $bg={darkBg} $pl={2}><IView3d /><UpDown /></SegBtn>
            </Seg>
            <MenuItem $ml={13}>ビュー</MenuItem>
            <MenuItem $ml={19}>選択</MenuItem>
            <MenuItem $ml={20}>追加</MenuItem>
            <MenuItem $ml={20}>オブジェクト</MenuItem>
            <Drop $ml={14} $w={150} $pl={4}>
              <ICube />
              <DropText>オブジェクトモード</DropText>
              <UpDown />
            </Drop>
            <Drop $ml={5} $w={35} $pl={2} $gap={2}>
              <ISphere />
              <UpDown />
            </Drop>
            <Seg $ml={4} $w={56}>
              <SegBtn $w={34} $bg={darkBg} $pl={3}><IPivot /><UpDown /></SegBtn>
              <SegBtn $center $bg={midBg}><IAround /></SegBtn>
            </Seg>
            <Seg $ml={4} $w={170}>
              <SegBtn $w={20} $center><IAxes /></SegBtn>
              <SegBtn $w={20} $center $bg="#5680c2"><IArrow /></SegBtn>
              <SegBtn $w={20} $center $bg="linear-gradient(#7a7a7a, #5e5e5e)"><IRotate /></SegBtn>
              <SegBtn $w={20} $center $bg="linear-gradient(#7a7a7a, #5e5e5e)"><IScale /></SegBtn>
              <SegBtn $bg={darkBg} $c="#e8e8e8" $pl={7}>
                <DropText>グローバル</DropText>
                <UpDown />
              </SegBtn>
            </Seg>
            <Layers ml={5} dot />
            <Layers ml={6} />
            <Seg $ml={6} $w={20}><SegBtn $center $bg={toolBg}><IChainDoc /></SegBtn></Seg>
            <Seg $ml={5} $w={20}><SegBtn $center $bg={midBg}><IProp /></SegBtn></Seg>
            <Seg $ml={6} $w={73}>
              <SegBtn $w={19} $center $bg="linear-gradient(#9c9c9c, #7c7c7c)"><IMagnet /></SegBtn>
              <SegBtn $w={35} $bg={darkBg} $pl={2}>
                <ISnapEl />
                <UpDown />
              </SegBtn>
              <SegBtn $center><ISnapIn /></SegBtn>
            </Seg>
            <Seg $ml={6} $w={39}>
              <SegBtn $center $bg={toolBg}><IRenderCam /></SegBtn>
              <SegBtn $center $bg={toolBg}><IClapper /></SegBtn>
            </Seg>
          </HeaderBar>

          <Timeline>
            <Range $w={250} $bg="#404040" $major="#333" $minor="#3a3a3a" $off={37.5} $end />
            <Range $w={511} $bg="#6f6f6f" $major="#5e5e5e" $minor="#676767" $off={0} />
            <Range $w={700} $bg="#404040" $major="#333" $minor="#3a3a3a" $off={0} />
            <Playhead />
            <Corner />
          </Timeline>
          <RulerWrap>
            <Ruler>
              <RulerKnob />
              {frames.map((f) => (
                <RulerLabel key={f}>{f}</RulerLabel>
              ))}
            </Ruler>
          </RulerWrap>
          <HeaderBar $h={27} $pt={4} $pl={9}>
            <Seg $w={30}>
              <SegBtn $bg={darkBg} $pl={2}><IClock /><UpDown /></SegBtn>
            </Seg>
            <MenuItem $ml={13}>ビュー</MenuItem>
            <MenuItem $ml={19}>マーカー</MenuItem>
            <MenuItem $ml={21}>フレーム</MenuItem>
            <MenuItem $ml={19}>再生</MenuItem>
            <Seg $ml={14} $w={39}>
              <SegBtn $center $bg={toolBg}><IClock tint /></SegBtn>
              <SegBtn $center $bg={toolBg}><IPadlock /></SegBtn>
            </Seg>
            <NumGroup $row $ml={5} $w={229} $h={20}>
              <NumRow $side $pr={15}><span>開始:</span><span>1</span></NumRow>
              <NumRow $side $pr={15}><span>終了:</span><span>120</span></NumRow>
            </NumGroup>
            <NumGroup $ml={6} $w={90} $h={20}>
              <NumRow $end $pr={15}><span>63</span></NumRow>
            </NumGroup>
            <Seg $ml={17} $w={117}>
              <SegBtn $center><IPlay d="M2 3h2v10H2zM9 3v10L4 8zM14 3v10L9 8z" /></SegBtn>
              <SegBtn $center><IPlay d="M8 3v10L3 8zM13 3v10L8 8z" /></SegBtn>
              <SegBtn $center><IPlay d="M12 2v12L4 8z" /></SegBtn>
              <SegBtn $center><IPlay d="M4 2v12l8-6z" /></SegBtn>
              <SegBtn $center><IPlay d="M3 3v10l5-5zM8 3v10l5-5z" /></SegBtn>
              <SegBtn $center><IPlay d="M2 3v10l5-5zM7 3v10l5-5zM12 3h2v10h-2z" /></SegBtn>
            </Seg>
            <Drop $ml={7} $w={89}>
              <DropText>同期しない</DropText>
              <UpDown />
            </Drop>
            <Seg $ml={18} $w={19}><SegBtn $center $bg={midBg}><IRec /></SegBtn></Seg>
            <Seg $ml={6} $w={169}>
              <SegBtn $pl={2} $bg={fieldBg}><IKeyGold /></SegBtn>
              <SegBtn $w={20} $center><IKey /></SegBtn>
              <SegBtn $w={19} $center><IKey cross /></SegBtn>
            </Seg>
            <Corner bl />
          </HeaderBar>
        </LeftCol>

        <RightCol>
          <HeaderBar $h={26} $pl={8} $line>
            <Drop $w={30} $pl={2} $gap={2}><IOutliner /><UpDown /></Drop>
            <MenuItem $ml={14}>ビュー</MenuItem>
            <MenuItem $ml={19}>検索</MenuItem>
            <Drop $ml={12} $w={117}>
              <DropText>全てのシーン</DropText>
              <UpDown />
            </Drop>
            <FieldBox $ml={6} $w={110} $pl={3}><IMag /></FieldBox>
            <Corner />
          </HeaderBar>
          <Outliner>
            <OutRow $sel>
              <OutName $pl={2}>
                <Expander />
                <Halo $bg="#8f9aa0" $ml={8}><IScene /></Halo>
                <OutText $ml={2}>Scene</OutText>
              </OutName>
              <OutCell $first /><OutCell $first /><OutCell $first />
            </OutRow>
            <OutRow $alt>
              <OutName $pl={27}>
                <Expander $plus />
                <Halo $ml={1}><IRender /></Halo>
                <OutText $ml={4}>レンダーレイヤー</OutText>
                <Bar $ml={10} $mr={6} />
                <Halo $bg="#8a8a8a"><IRender faded /></Halo>
              </OutName>
              <OutCell /><OutCell /><OutCell />
            </OutRow>
            <OutRow>
              <OutName $pl={40}>
                <Halo $bg="#8f9aa0"><IWorld /></Halo>
                <OutText $ml={2}>World</OutText>
              </OutName>
              <OutCell /><OutCell /><OutCell />
            </OutRow>
            <OutRow $alt>
              <OutName $pl={22}>
                <Expander $plus />
                <Halo $ml={8}><IOCam /></Halo>
                <OutText $ml={2}>Camera</OutText>
                <Bar $ml={7} $mr={6} />
                <Halo $bg="#9c9c9c"><IOCam grey /></Halo>
              </OutName>
              <OutCell><IEye /></OutCell><OutCell><ICursor /></OutCell><OutCell><ICam /></OutCell>
            </OutRow>
            <OutRow>
              <OutName $pl={22}>
                <Expander $plus />
                <ILamp />
                <OutText $ml={3}>Lamp</OutText>
                <Bar $ml={7} $mr={9} />
                <ILampData />
              </OutName>
              <OutCell><IEye /></OutCell><OutCell><ICursor /></OutCell><OutCell><ICam off /></OutCell>
            </OutRow>
            <OutRow $alt>
              <OutName $pl={22} $c="#f2f2f2">
                <Expander $plus />
                <Halo $bg="#a8743f" $ml={8}><IMesh /></Halo>
                <OutText $ml={2}>Plane</OutText>
                <Bar $ml={7} $mr={9} />
                <IMesh grey />
              </OutName>
              <OutCell><IEye /></OutCell><OutCell><ICursor /></OutCell><OutCell><ICam /></OutCell>
            </OutRow>
            <OutRow><span /><OutCell /><OutCell /><OutCell /></OutRow>
            <OutRow $alt><span /><OutCell /><OutCell /><OutCell /></OutRow>
            <TreeLines viewBox="0 0 60 153">
              <path d="M7 10h20M26 20v90M26 30h6M26 70h14M26 90h14M26 110h14" stroke="#2a2a2a" fill="none" />
            </TreeLines>
            <Corner bl />
          </Outliner>

          <HeaderBar $h={26} $pl={8}>
            <Drop $w={30} $pl={2} $gap={2}><IButtons /><UpDown /></Drop>
            <TabStrip>
              <PropTab><ICam off /></PropTab>
              <PropTab><IRender /></PropTab>
              <PropTab><IScene /></PropTab>
              <PropTab><IWorld /></PropTab>
              <PropTab><ICube /></PropTab>
              <PropTab><ILink /></PropTab>
              <PropTab><IWrench /></PropTab>
              <PropTab><IMesh grey /></PropTab>
              <PropTab><IMatBall /></PropTab>
              <PropTab $on><IChecker /></PropTab>
              <PropTab><ISparks /></PropTab>
              <PropTab><IPhysics /></PropTab>
            </TabStrip>
            <Corner />
          </HeaderBar>

          <Props>
            <PropsBody>
              <PropRow><Label $pl={8}>画像: サイズ 1100 x 1100、 RGBA byte型</Label></PropRow>
              <PropRow $mt={5}>
                <Label $w={125}>色空間:</Label>
                <Drop $pl={7}><DropText>sRGB</DropText><UpDown /></Drop>
              </PropRow>
              <Check mt={1}>ビューにも適用</Check>
              <Check mt={5} on>アルファを使用</Check>
              <PropRow $mt={3}>
                <Label $w={125}>アルファ:</Label>
                <Drop><DropText>ストレート</DropText><UpDown /></Drop>
              </PropRow>
              <Check mt={5}>フィールド</Check>
              <Seg $mt={2} $h={20}>
                <SegBtn $w={181} $center $bg="#5c7399" $c="#3b4f72">上優先(偶数)</SegBtn>
                <SegBtn $center $bg="#5a5a5a" $c="#8f8f8f">下優先(奇数)</SegBtn>
              </Seg>
              <Sep $mt={6} $ml={-3} $mr={-3} />
              <PanelHead title="画像のサンプリング" open={false} h={22} pl={5} mr={3} />
              <Sep $ml={-3} $mr={-3} />
              <PanelHead title="イメージマッピング" open={false} h={23} pl={5} mr={3} />
              <Sep $ml={-3} $mr={-3} />
              <PanelHead title="マッピング" h={22} pl={5} mr={3} />
              <PropRow $mt={12}>
                <Label $w={114}>座標:</Label>
                <Drop><DropText>UV</DropText><UpDown /></Drop>
              </PropRow>
              <PropRow $mt={5}>
                <Label $w={114}>マップ:</Label>
                <FieldBox $pl={4}><IChecks /></FieldBox>
              </PropRow>
              <PropRow $mt={5}>
                <Label $w={114}>投影:</Label>
                <Drop><DropText>フラット</DropText><UpDown /></Drop>
              </PropRow>
              <PropRow $mt={5}>
                <Check>複製の親</Check>
                <Drop $w={54} $auto><DropText>X</DropText><UpDown /></Drop>
                <Drop $w={54} $ml={8}><DropText>Y</DropText><UpDown /></Drop>
                <Drop $w={54} $ml={8}><DropText>Z</DropText><UpDown /></Drop>
              </PropRow>
              <Cols $mt={9}>
                <Label>オフセット:</Label>
                <Label>サイズ:</Label>
              </Cols>
              <Cols $mt={1}>
                <Nums rows={[["X:", "0.00000"], ["Y:", "0.00000"], ["Z:", "0.00000"]]} />
                <Nums rows={[["X:", "1.00"], ["Y:", "1.00"], ["Z:", "1.00"]]} />
              </Cols>
              <Sep $mt={7} $ml={-3} $mr={-3} />
              <PanelHead title="影響" h={22} pl={5} mr={3} />
              <Cols $mt={15}>
                <Label>ディフューズ:</Label>
                <Label>シェーディング:</Label>
              </Cols>
              <Cols $mt={3}>
                <div>
                  <SlideRow $mt={0}><Box /><Slide><span>強度:</span><span>1.000</span></Slide></SlideRow>
                  <SlideRow><Box /><Slide><span>カラー:</span><span>1.000</span></Slide></SlideRow>
                  <SlideRow><Box><TickMark /></Box><Slide $on><span>アルファ:</span><span>1.000</span></Slide></SlideRow>
                  <SlideRow><Box /><Slide><span>透光性:</span><span>1.000</span></Slide></SlideRow>
                </div>
                <div>
                  <SlideRow $mt={0}><Box /><Slide><span>周囲:</span><span>1.000</span></Slide></SlideRow>
                  <SlideRow><Box /><Slide><span>放射:</span><span>1.000</span></Slide></SlideRow>
                  <SlideRow><Box /><Slide><span>ミラー:</span><span>1.000</span></Slide></SlideRow>
                  <SlideRow><Box /><Slide><span>レイミラー:</span><span>1.000</span></Slide></SlideRow>
                </div>
              </Cols>
              <Cols $mt={7}>
                <Label>スペキュラー:</Label>
                <Label>ジオメトリ:</Label>
              </Cols>
              <Cols $mt={3}>
                <div>
                  <SlideRow $mt={0}><Box /><Slide><span>強度:</span><span>1.000</span></Slide></SlideRow>
                  <SlideRow><Box /><Slide><span>カラー:</span><span>1.000</span></Slide></SlideRow>
                  <SlideRow><Box /><Slide><span>硬さ:</span><span>1.000</span></Slide></SlideRow>
                </div>
                <div>
                  <SlideRow $mt={0}><Box /><Slide $fill={61}><span>ノーマル:</span><span>1.000</span></Slide></SlideRow>
                  <SlideRow><Box /><Slide $fill={6}><span>ワープ:</span><span>0.000</span></Slide></SlideRow>
                  <SlideRow><Box /><Slide $fill={61}><span>ディスプレイス:</span><span>0.200</span></Slide></SlideRow>
                </div>
              </Cols>
              <Cols $mt={16}>
                <PropRow>
                  <Label $w={64}>ブレンド:</Label>
                  <Drop><DropText>ミックス</DropText><UpDown /></Drop>
                </PropRow>
                <Check>負</Check>
              </Cols>
              <Cols $mt={2}>
                <Check>RGBを強度に変換</Check>
                <Check>マスク</Check>
              </Cols>
              <Cols $mt={2}>
                <Swatch />
                <Slide $def>
                  <span>デフォルト値:</span><span>1.000</span>
                </Slide>
              </Cols>
              <Label $mt={9}>バンプマッピング</Label>
              <Cols $mt={7}>
                <PropRow>
                  <Label $w={64} $c="#565656">方式:</Label>
                  <Drop $off><DropText>低品質</DropText><UpDown /></Drop>
                </PropRow>
                <PropRow>
                  <Label $w={64} $c="#565656">スペース:</Label>
                  <Drop $off $pl={6}><DropText>オブジェクトス...</DropText><UpDown /></Drop>
                </PropRow>
              </Cols>
              <Sep $mt={7} $ml={-3} $mr={-3} />
              <PanelHead title="カスタムプロパティ" open={false} h={24} pl={5} mr={3} />
            </PropsBody>
            <Scroll $r={3} $top={6} $len={814}>
              <ScrollThumb $top={342} $len={470} />
            </Scroll>
            <Corner bl />
          </Props>
        </RightCol>
      </Main>
    </Screen>
  );
}
